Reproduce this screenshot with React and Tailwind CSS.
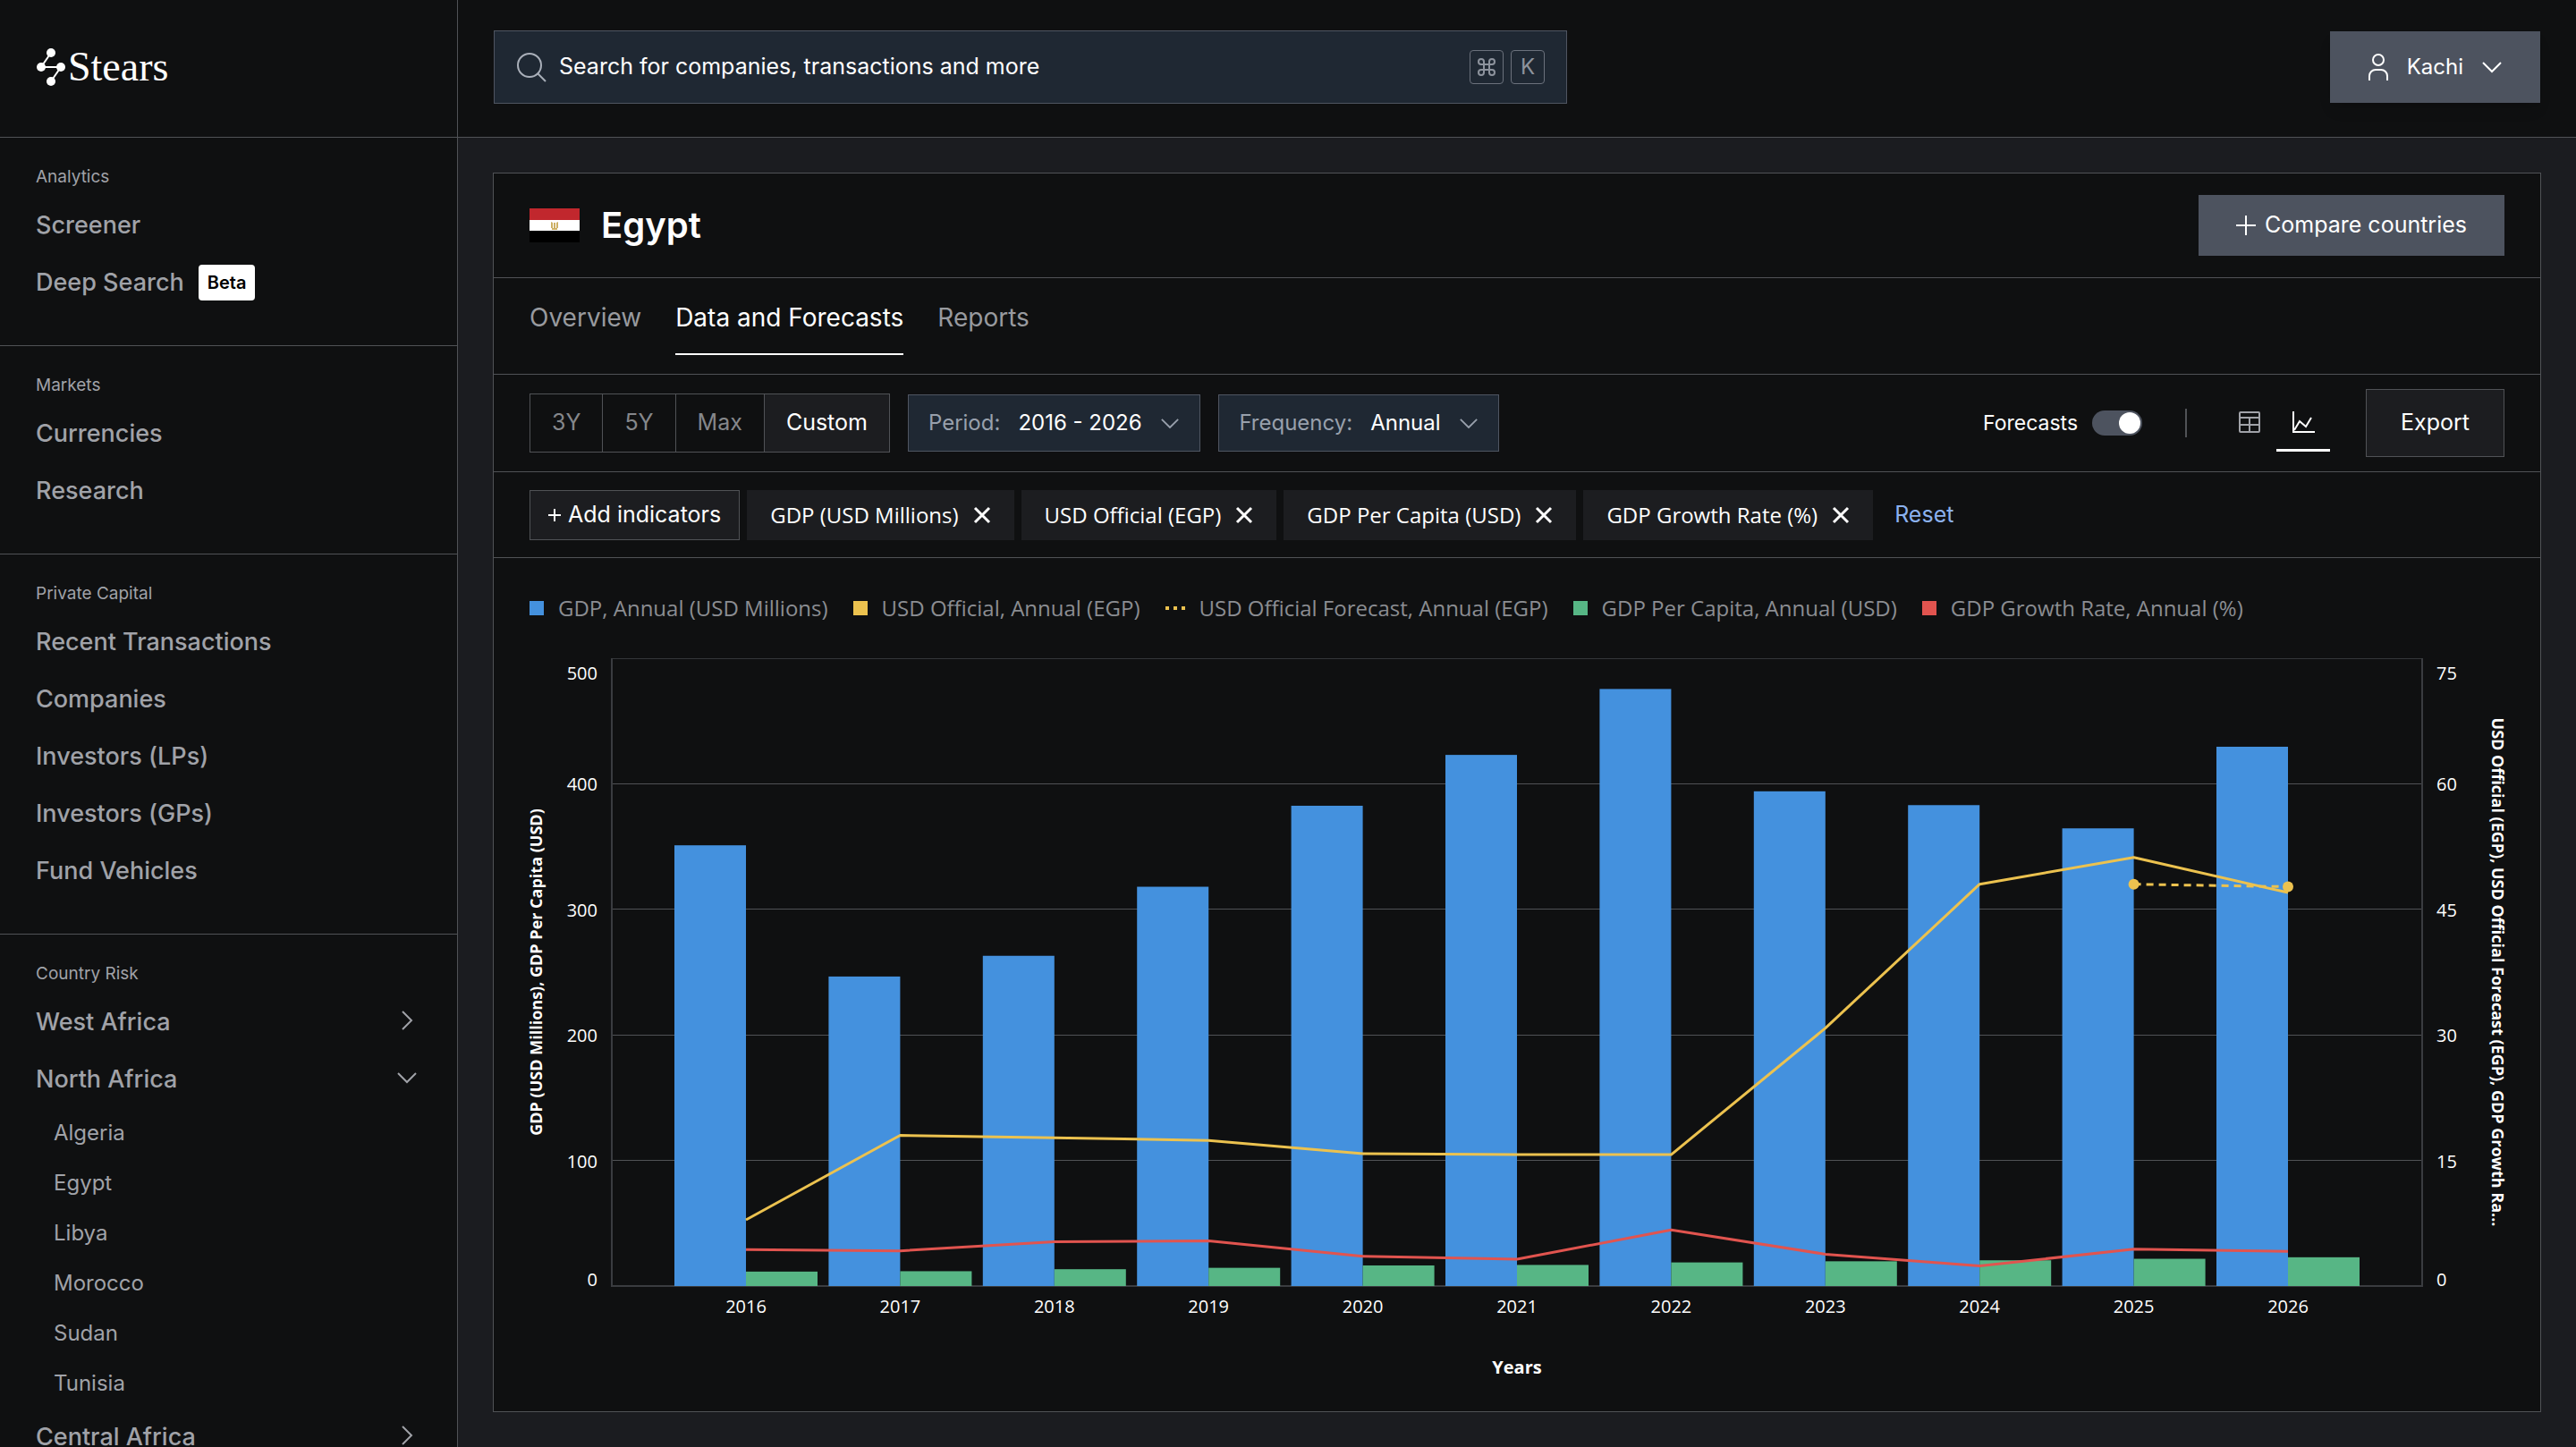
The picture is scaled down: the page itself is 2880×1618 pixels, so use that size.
import { useState } from "react";
import clsx from "clsx";

const menu = [
  { title: "Analytics", items: [{ name: "Screener" }, { name: "Deep Search", badge: "Beta" }] },
  { title: "Markets", items: [{ name: "Currencies" }, { name: "Research" }] },
  {
    title: "Private Capital",
    items: [
      { name: "Recent Transactions" },
      { name: "Companies" },
      { name: "Investors (LPs)" },
      { name: "Investors (GPs)" },
      { name: "Fund Vehicles" },
    ],
  },
];

const regions = [
  { name: "West Africa", countries: ["Ghana", "Nigeria", "Senegal"] },
  { name: "North Africa", countries: ["Algeria", "Egypt", "Libya", "Morocco", "Sudan", "Tunisia"] },
  { name: "Central Africa", countries: ["Cameroon", "Chad", "Gabon"] },
];

const legend = [
  { name: "GDP, Annual (USD Millions)", color: "bg-[#4491de]" },
  { name: "USD Official, Annual (EGP)", color: "bg-[#ecc24f]" },
  { name: "USD Official Forecast, Annual (EGP)", dotted: true },
  { name: "GDP Per Capita, Annual (USD)", color: "bg-[#57b685]" },
  { name: "GDP Growth Rate, Annual (%)", color: "bg-[#e1544f]" },
];

// gdp and perCapita use the left axis (0-500), the rest the right one (0-75)
const data = [
  { year: 2016, gdp: 351, perCapita: 11.5, usd: 7.9, growth: 4.35 },
  { year: 2017, gdp: 246.5, perCapita: 11.8, usd: 18, growth: 4.2 },
  { year: 2018, gdp: 263, perCapita: 13.4, usd: 17.7, growth: 5.3 },
  { year: 2019, gdp: 318, perCapita: 14.5, usd: 17.4, growth: 5.4 },
  { year: 2020, gdp: 382.5, perCapita: 16.4, usd: 15.8, growth: 3.55 },
  { year: 2021, gdp: 423, perCapita: 16.8, usd: 15.7, growth: 3.2 },
  { year: 2022, gdp: 475.5, perCapita: 18.8, usd: 15.7, growth: 6.7 },
  { year: 2023, gdp: 394, perCapita: 19.7, usd: 30.8, growth: 3.8 },
  { year: 2024, gdp: 383, perCapita: 20.5, usd: 48, growth: 2.4 },
  { year: 2025, gdp: 364.5, perCapita: 21.7, usd: 51.2, growth: 4.4 },
  { year: 2026, gdp: 429.5, perCapita: 22.9, usd: 47, growth: 4.15 },
];

function ChevronDown({ className }) {
  return (
    <svg viewBox="0 0 24 14" className={className} fill="none" stroke="currentColor" strokeWidth="2">
      <path d="M2 2l10 10L22 2" />
    </svg>
  );
}

function ChevronRight({ className }) {
  return (
    <svg viewBox="0 0 14 24" className={className} fill="none" stroke="currentColor" strokeWidth="2">
      <path d="M2 2l10 10L2 22" />
    </svg>
  );
}

function Logo() {
  return (
    <a href="#" className="flex items-center gap-0.5 text-white">
      <svg viewBox="0 0 34 44" className="h-11 w-[34px]" fill="currentColor" stroke="currentColor">
        <path d="M17 6L6 22h22L17 38" fill="none" strokeWidth="2" />
        <g stroke="none">
          <circle cx="17" cy="6" r="5" />
          <circle cx="6" cy="22" r="5" />
          <circle cx="28" cy="22" r="5" />
          <circle cx="17" cy="38" r="5" />
        </g>
      </svg>
      <span className="font-['Liberation_Serif',serif] text-[46px] leading-none">Stears</span>
    </a>
  );
}

function Sidebar() {
  const [open, setOpen] = useState("North Africa");

  return (
    <aside className="w-[512px] shrink-0 overflow-hidden border-r border-[#505256] text-[#a0a2a8]">
      <div className="flex h-[154px] items-center border-b border-[#505256] px-10 pb-1">
        <Logo />
      </div>
      <nav>
        {menu.map((section) => (
          <div key={section.title} className="border-b border-[#505256] px-10 pt-6 pb-[38px]">
            <h2 className="mb-0.5 text-[19px] leading-10">{section.title}</h2>
            {section.items.map((item) => (
              <a key={item.name} href="#" className="flex h-16 items-center gap-4 text-[27px] font-medium">
                {item.name}
                {item.badge && (
                  <span className="rounded bg-white px-[10px] text-xl leading-10 font-semibold text-black">{item.badge}</span>
                )}
              </a>
            ))}
          </div>
        ))}
        <div className="px-10 pt-6">
          <h2 className="mb-0.5 text-[19px] leading-10">Country Risk</h2>
          {regions.map((region) => (
            <div key={region.name}>
              <button
                className="flex h-16 w-full items-center justify-between text-[27px] font-medium"
                onClick={() => setOpen(open === region.name ? "" : region.name)}
              >
                {region.name}
                <span className="flex w-8 items-center justify-center pb-1">
                  {open === region.name ? <ChevronDown className="w-6" /> : <ChevronRight className="h-6" />}
                </span>
              </button>
              {open === region.name && (
                <ul className="pl-5">
                  {region.countries.map((country) => (
                    <li key={country}>
                      <a href="#" className="block h-14 text-2xl leading-[56px]">{country}</a>
                    </li>
                  ))}
                </ul>
              )}
            </div>
          ))}
        </div>
      </nav>
    </aside>
  );
}

function Header() {
  return (
    <header className="flex items-center justify-between border-b border-[#505256] px-10 pt-[34px] pb-[37px]">
      <label className="flex h-[82px] w-[1200px] items-center border border-[#4f5561] bg-[#1f2833] px-6">
        <svg viewBox="0 0 34 34" className="h-[34px] w-[34px] shrink-0 text-[#a9afb9]" fill="none" stroke="currentColor" strokeWidth="2">
          <circle cx="15" cy="15" r="13" />
          <path d="M24 24l9 9" />
        </svg>
        <input
          type="text"
          aria-label="Search"
          placeholder="Search for companies, transactions and more"
          className="ml-[14px] min-w-0 flex-1 bg-transparent text-[25px] text-white outline-none placeholder:text-white"
        />
        <span className="flex gap-2 text-[#8d939d]">
          <kbd className="flex h-[38px] w-[38px] items-center justify-center rounded border border-[#6b717c]">
            <svg viewBox="0 0 24 24" className="h-6 w-6" fill="none" stroke="currentColor" strokeWidth="2">
              <path d="M15 6v12a3 3 0 1 0 3-3H6a3 3 0 1 0 3 3V6a3 3 0 1 0-3 3h12a3 3 0 1 0-3-3" />
            </svg>
          </kbd>
          <kbd className="flex h-[38px] w-[38px] items-center justify-center rounded border border-[#6b717c] font-[Inter,sans-serif] text-2xl">K</kbd>
        </span>
      </label>
      <button className="flex h-20 items-center gap-5 bg-[#4d535f] px-[42px] text-2xl text-white shadow-lg">
        <svg viewBox="0 0 24 32" className="h-8 w-6" fill="none" stroke="currentColor" strokeWidth="2">
          <circle cx="12" cy="8" r="6" />
          <path d="M2 31v-5a7 7 0 0 1 7-7h6a7 7 0 0 1 7 7v5" />
        </svg>
        Kachi
        <ChevronDown className="w-6" />
      </button>
    </header>
  );
}

function EgyptFlag() {
  return (
    <svg viewBox="0 0 56 38" className="h-[38px] w-14">
      <rect width="56" height="38" fill="#000" />
      <rect width="56" height="25" fill="#fff" />
      <rect width="56" height="13" fill="#c1272d" />
      <path d="M24 15l2 1v6h-2zM32 15l-2 1v6h2zM27 16h2v6h-2zM25 22h6v2h-6z" fill="#cdb065" />
    </svg>
  );
}

function Chart() {
  const left = 92;
  const right = 2116;
  const top = 36;
  const bottom = 738;
  const height = bottom - top;
  const x = (i) => 242 + i * 172.4;
  const y = (v) => bottom - (v / 500) * height;
  const y2 = (v) => bottom - (v / 75) * height;
  const line = (key) => data.map((d, i) => `${x(i)},${y2(d[key])}`).join(" ");

  // the first and last labels stay inside the plot
  const tickY = (i) => {
    if (i === 0) return bottom;
    if (i === 5) return top + 24;
    return y(i * 100) + 8;
  };

  return (
    <svg viewBox="0 0 2208 860" className="mt-0.5 w-full overflow-visible font-['Open_Sans',sans-serif]" fill="#fff">
      {[0, 1, 2, 3, 4, 5].map((i) => (
        <g key={i}>
          <path
            d={`M${left} ${Math.floor(y(i * 100))}H${right}`}
            stroke={i === 5 ? "#34363a" : "#505256"}
            strokeWidth="1"
            shapeRendering="crispEdges"
          />
          <text x="76" y={tickY(i)} textAnchor="end" className="text-xl font-medium">{i * 100}</text>
          <text x="2132" y={tickY(i)} className="text-xl font-medium">{i * 15}</text>
        </g>
      ))}
      <path d={`M${left} ${top}V${bottom}H${right}V${top}`} fill="none" stroke="#3a3c40" strokeWidth="2" />
      {data.map((d, i) => (
        <g key={d.year}>
          <rect x={x(i) - 80} y={y(d.gdp)} width="80" height={bottom - y(d.gdp)} fill="#4491de" />
          <rect x={x(i)} y={y(d.perCapita)} width="80" height={bottom - y(d.perCapita)} fill="#57b685" />
          <text x={x(i)} y="768" textAnchor="middle" className="text-xl">{d.year}</text>
        </g>
      ))}
      <g fill="none" strokeWidth="3" strokeLinejoin="round">
        <polyline points={line("usd")} stroke="#ecc24f" />
        <polyline points={line("growth")} stroke="#e1544f" />
        <path d={`M${x(9)} ${y2(48)}L${x(10)} ${y2(47.7)}`} stroke="#ecc24f" strokeDasharray="8 6" />
      </g>
      <circle cx={x(9)} cy={y2(48)} r="6" fill="#ecc24f" />
      <circle cx={x(10)} cy={y2(47.7)} r="6" fill="#ecc24f" />
      <text transform="translate(14 387) rotate(-90)" textAnchor="middle" className="text-lg font-bold">
        GDP (USD Millions), GDP Per Capita (USD)
      </text>
      <text transform="translate(2194 387) rotate(90)" textAnchor="middle" className="text-lg font-bold">
        USD Official (EGP), USD Official Forecast (EGP), GDP Growth Ra...
      </text>
      <text x="1104" y="836" textAnchor="middle" className="text-xl font-bold">Years</text>
    </svg>
  );
}

function App() {
  const [range, setRange] = useState("Custom");
  const [view, setView] = useState("chart");
  const [indicators, setIndicators] = useState([
    "GDP (USD Millions)",
    "USD Official (EGP)",
    "GDP Per Capita (USD)",
    "GDP Growth Rate (%)",
  ]);

  return (
    <div className="flex h-screen overflow-hidden bg-[#0f1011] font-[Inter,sans-serif]">
      <Sidebar />
      <div className="flex min-w-0 flex-1 flex-col">
        <Header />
        <main className="flex-1 bg-[#1b1c20] p-[39px]">
          <section className="flex h-full flex-col border border-[#505256] bg-[#0f1011]">
            <div className="flex items-center justify-between border-b border-[#505256] px-10 py-6">
              <div className="flex items-center gap-6">
                <EgyptFlag />
                <h1 className="text-[40px] leading-none font-semibold text-white">Egypt</h1>
              </div>
              <button className="flex h-[68px] items-center gap-[10px] bg-[#4d535f] px-[42px] text-[25px] text-white">
                <svg viewBox="0 0 22 22" className="w-[22px]" stroke="currentColor" strokeWidth="2">
                  <path d="M11 0v22M0 11h22" />
                </svg>
                Compare countries
              </button>
            </div>

            <nav className="flex gap-[38px] border-b border-[#505256] px-10 pt-5 pb-[21px] text-[28px] leading-[48px] text-[#989a9f]">
              <a href="#" className="pb-[18px]">Overview</a>
              <a href="#" className="border-b-2 border-white pb-4 text-white">Data and Forecasts</a>
              <a href="#" className="pb-[18px]">Reports</a>
            </nav>

            <div className="flex items-center justify-between border-b border-[#505256] px-10 py-4 text-2xl">
              <div className="flex items-center gap-5">
                <div className="flex divide-x divide-[#505256] border border-[#505256] text-[25px]">
                  {["3Y", "5Y", "Max", "Custom"].map((item) => (
                    <button
                      key={item}
                      className={clsx("h-16 px-6", range === item ? "bg-[#1c1d20] text-white" : "text-[#85878b]")}
                      onClick={() => setRange(item)}
                    >
                      {item}
                    </button>
                  ))}
                </div>
                <label className="flex h-16 items-center gap-5 border border-[#4f5561] bg-[#1f2833] px-[22px] text-[#98a0ac]">
                  Period:
                  <select className="appearance-none bg-transparent text-white outline-none">
                    <option>2016 - 2026</option>
                  </select>
                  <ChevronDown className="w-[22px]" />
                </label>
                <label className="flex h-16 items-center gap-5 border border-[#4f5561] bg-[#1f2833] px-[22px] text-[#98a0ac]">
                  Frequency:
                  <select className="appearance-none bg-transparent text-white outline-none">
                    <option>Annual</option>
                  </select>
                  <ChevronDown className="w-[22px]" />
                </label>
              </div>
              <div className="flex items-center text-white">
                <label className="flex items-center gap-4 text-[23px]">
                  Forecasts
                  <input
                    type="checkbox"
                    role="switch"
                    defaultChecked
                    className="flex h-7 w-14 appearance-none items-center rounded-full bg-[#4d535f] px-0.5 before:h-6 before:w-6 before:rounded-full before:bg-white checked:justify-end"
                  />
                </label>
                <span className="mr-10 ml-12 h-8 w-0.5 bg-[#505256]" />
                <button
                  aria-label="Table view"
                  className={clsx("flex h-16 w-[60px] items-center justify-center border-b-3", view === "table" ? "border-white" : "border-transparent text-[#a0a2a8]")}
                  onClick={() => setView("table")}
                >
                  <svg viewBox="0 0 24 24" className="w-6" fill="none" stroke="currentColor" strokeWidth="2">
                    <rect x="1" y="1" width="22" height="22" rx="1" />
                    <path d="M1 7h22M1 15h22M12 7v16" />
                  </svg>
                </button>
                <button
                  aria-label="Chart view"
                  className={clsx("flex h-16 w-[60px] items-center justify-center border-b-3", view === "chart" ? "border-white" : "border-transparent text-[#a0a2a8]")}
                  onClick={() => setView("chart")}
                >
                  <svg viewBox="0 0 26 26" className="w-[26px]" fill="none" stroke="currentColor" strokeWidth="2">
                    <path d="M2 1v23h24" />
                    <path d="M3 22l6-10 7 6 6-10" />
                  </svg>
                </button>
                <button className="ml-10 h-[76px] border border-[#505256] bg-[#1c1d20] px-[38px] text-[25px]">Export</button>
              </div>
            </div>

            <div className="flex gap-2 border-b border-[#505256] px-10 pt-5 pb-[19px] text-2xl text-white">
              <button className="flex h-14 items-center gap-2 border border-[#505256] bg-[#1c1d20] px-5 text-[25px]">
                <svg viewBox="0 0 14 14" className="w-[14px]" stroke="currentColor" strokeWidth="2">
                  <path d="M7 0v14M0 7h14" />
                </svg>
                Add indicators
              </button>
              {indicators.map((item) => (
                <div key={item} className="flex h-14 items-center gap-4 bg-[#1c1d20] px-[26px] font-['Open_Sans',sans-serif]">
                  {item}
                  <button aria-label={`Remove ${item}`} onClick={() => setIndicators(indicators.filter((i) => i !== item))}>
                    <svg viewBox="0 0 20 20" className="w-5" stroke="currentColor" strokeWidth="3">
                      <path d="M2 2l16 16M18 2L2 18" />
                    </svg>
                  </button>
                </div>
              ))}
              <button className="ml-4 text-[25px] text-[#8bb1ee]" onClick={() => setIndicators([])}>Reset</button>
            </div>

            <div className="px-10 pt-[38px]">
              <ul className="flex gap-7 font-['Open_Sans',sans-serif] text-2xl leading-9 text-[#8b8d92]">
                {legend.map((item) => (
                  <li key={item.name} className="flex items-center gap-4">
                    {item.dotted ? (
                      <svg viewBox="0 0 22 4" className="w-[22px]" fill="#ecc24f">
                        <path d="M0 0h4v4H0zM9 0h4v4H9zM18 0h4v4h-4z" />
                      </svg>
                    ) : (
                      <span className={clsx("h-4 w-4", item.color)} />
                    )}
                    {item.name}
                  </li>
                ))}
              </ul>
              <Chart />
            </div>
          </section>
        </main>
      </div>
    </div>
  );
}

export default App;
